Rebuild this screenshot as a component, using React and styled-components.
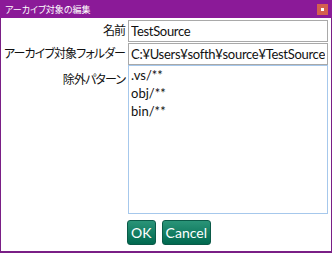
import React, { useState } from 'react';
import styled, { createGlobalStyle } from 'styled-components';

const Global = createGlobalStyle`
  html, body { margin: 0; padding: 0; background: #ffffff; }
  body { font-family: "Lato", "Noto Sans CJK JP", sans-serif; }
`;

const Window = styled.div`
  width: 332px;
  height: 253px;
  box-sizing: border-box;
  display: flex;
  flex-direction: column;
  border: 1px solid #7a1f86;
  border-top: none;
  border-bottom-width: 2px;
  background: #ffffff;
`;

const TitleBar = styled.div`
  height: 18px;
  margin: 0 -1px;
  background: #8b1a98;
  display: flex;
  align-items: center;
  justify-content: space-between;
  padding: 0 4px 0 5px;
  color: #ffffff;
  font-family: "Noto Sans CJK JP", sans-serif;
  font-size: 9px;
  font-feature-settings: "palt";
`;

const CloseButton = styled.div`
  width: 11px;
  height: 11px;
  background: #d4604e;
  display: flex;
  align-items: center;
  justify-content: center;
  &::after {
    content: '';
    width: 3px;
    height: 3px;
    background: #ffffff;
  }
`;

const Form = styled.div`
  flex: 1;
  display: grid;
  grid-template-columns: auto 1fr;
  grid-template-rows: 22px 22px 1fr auto;
  column-gap: 3px;
  row-gap: 1px;
  padding: 2px 3px 6px 3px;
`;

const Label = styled.div`
  font-family: "Noto Sans CJK JP", sans-serif;
  font-feature-settings: "palt";
  font-size: 12px;
  letter-spacing: -0.9px;
  color: #111111;
  text-align: right;
  line-height: 20px;
  padding-top: ${p => p.$top || 0}px;
`;

const Field = styled.input`
  box-sizing: border-box;
  height: 22px;
  border: 1px solid #a9a9a9;
  padding: 0 2px;
  font-family: "Lato", "Noto Sans CJK JP", sans-serif;
  font-size: 13px;
  letter-spacing: -0.3px;
  color: #111111;
  outline: none;
  min-width: 0;
`;

const Area = styled.textarea`
  box-sizing: border-box;
  border: 1px solid #a6c8ec;
  padding: 0 2px;
  margin-top: -1px;
  font-family: "Lato", "Noto Sans CJK JP", sans-serif;
  font-size: 13px;
  line-height: 18px;
  color: #111111;
  resize: none;
  outline: none;
  min-width: 0;
`;

const Buttons = styled.div`
  grid-column: 2;
  display: flex;
  gap: 6px;
  padding-top: 5px;
  margin-left: -1px;
`;

const Button = styled.button`
  height: 25px;
  padding: 0 3px;
  border: 1px solid #0b5a48;
  border-radius: 3px;
  background: linear-gradient(#2a9478, #00694f);
  color: #ffffff;
  font-family: "Lato", sans-serif;
  font-size: 14px;
`;

export default function App() {
  const [patterns, setPatterns] = useState('.vs/**\nobj/**\nbin/**');
  return (
    <>
      <Global />
      <Window>
        <TitleBar>
          <span>アーカイブ対象の編集</span>
          <CloseButton />
        </TitleBar>
        <Form>
          <Label>名前</Label>
          <Field defaultValue="TestSource" />
          <Label>アーカイブ対象フォルダー</Label>
          <Field defaultValue="C:¥Users¥softh¥source¥TestSource" />
          <Label $top={3}>除外パターン</Label>
          <Area value={patterns} onChange={e => setPatterns(e.target.value)} />
          <Buttons>
            <Button>OK</Button>
            <Button>Cancel</Button>
          </Buttons>
        </Form>
      </Window>
    </>
  );
}
